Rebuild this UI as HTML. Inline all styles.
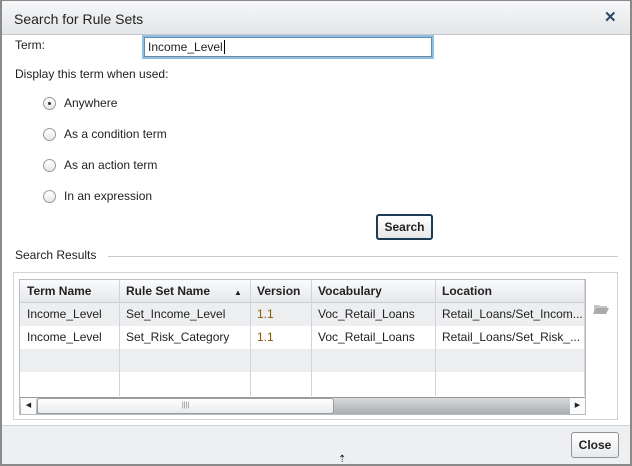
<!DOCTYPE html>
<html><head><style>
*{box-sizing:border-box;margin:0;padding:0}
body{width:632px;height:466px;overflow:hidden;background:#fff;font-family:"Liberation Sans",sans-serif;font-size:12px;color:#222;position:relative}
.a{position:absolute}
.frame{left:0;top:0;width:632px;height:466px;border:2px solid #8a8a8a;border-top:1px solid #8a8a8a}
.title{left:2px;top:1px;width:628px;height:34px;background:linear-gradient(#f6f7f8,#e3e5e8);border-bottom:1px solid #c5c8cc}
.radio{width:13px;height:13px;border-radius:50%;border:1px solid #9a9a9a;background:linear-gradient(#fff,#e8e8e8)}
.cell{position:absolute;white-space:nowrap;overflow:hidden;height:23px;line-height:23px;padding-left:7px}
.hd{font-weight:bold;color:#222;font-size:12px}
.vl{position:absolute;top:0;width:1px;height:116px;background:#d0d3d7}
</style></head><body>
<div class="a title"></div>
<div class="a" style="left:14px;top:11px;font-size:14px;color:#222">Search for Rule Sets</div>
<div class="a" style="left:604px;top:8px;font-size:15px;font-weight:bold;color:#2a4a6a">✕</div>
<div class="a" style="left:15px;top:38px">Term:</div>
<div class="a" style="left:142px;top:35px;width:292px;height:24px;border:2px solid #8fc0e3;background:#fff"><div style="border:1px solid #6b8aa8;height:20px;padding-left:3px;line-height:19px">Income_Level<span style="border-left:1px solid #000;margin-left:1px"></span></div></div>
<div class="a" style="left:15px;top:67px">Display this term when used:</div>
<div class="a radio" style="left:43px;top:97px"><div style="position:absolute;left:4px;top:4px;width:3px;height:3px;background:#333;border-radius:50%"></div></div>
<div class="a" style="left:64px;top:96px">Anywhere</div>
<div class="a radio" style="left:43px;top:128px"></div>
<div class="a" style="left:64px;top:127px">As a condition term</div>
<div class="a radio" style="left:43px;top:159px"></div>
<div class="a" style="left:64px;top:158px">As an action term</div>
<div class="a radio" style="left:43px;top:190px"></div>
<div class="a" style="left:64px;top:189px">In an expression</div>
<div class="a" style="left:376px;top:214px;width:57px;height:26px;border:2px solid #1d3a55;border-radius:3px;background:linear-gradient(#fff,#e6e7e9);font-weight:bold;text-align:center;line-height:22px">Search</div>
<div class="a" style="left:15px;top:248px">Search Results</div>
<div class="a" style="left:108px;top:256px;width:510px;height:1px;background:#c6cace"></div>
<div class="a" style="left:13px;top:272px;width:605px;height:148px;border:1px solid #d0d3d7"></div>
<div class="a" style="left:19px;top:279px;width:567px;height:136px;border:1px solid #b8bcc1;overflow:hidden;background:#fff">
 <div class="a" style="left:0;top:0;width:567px;height:23px;background:linear-gradient(#fafbfc,#e6e8eb);border-bottom:1px solid #c8cbcf"></div>
 <div class="a" style="left:0;top:23px;width:567px;height:23px;background:#eceef0"></div>
 <div class="a" style="left:0;top:69px;width:567px;height:23px;background:#eceef0"></div>
 <div class="vl" style="left:99px"></div><div class="vl" style="left:230px"></div><div class="vl" style="left:291px"></div><div class="vl" style="left:415px"></div><div class="vl" style="left:564px"></div>
 <div class="cell hd" style="left:0;top:0">Term Name</div>
 <div class="cell hd" style="left:99px;top:0">Rule Set Name</div>
 <div class="a" style="left:214px;top:8px;font-size:8px">▲</div>
 <div class="cell hd" style="left:230px;top:0">Version</div>
 <div class="cell hd" style="left:291px;top:0">Vocabulary</div>
 <div class="cell hd" style="left:415px;top:0">Location</div>
 <div class="cell" style="left:0;top:23px">Income_Level</div>
 <div class="cell" style="left:99px;top:23px">Set_Income_Level</div>
 <div class="cell" style="left:230px;top:23px;color:#8a5a00">1.1</div>
 <div class="cell" style="left:291px;top:23px">Voc_Retail_Loans</div>
 <div class="cell" style="left:415px;top:23px;width:150px">Retail_Loans/Set_Incom...</div>
 <div class="cell" style="left:0;top:46px">Income_Level</div>
 <div class="cell" style="left:99px;top:46px">Set_Risk_Category</div>
 <div class="cell" style="left:230px;top:46px;color:#8a5a00">1.1</div>
 <div class="cell" style="left:291px;top:46px">Voc_Retail_Loans</div>
 <div class="cell" style="left:415px;top:46px;width:150px">Retail_Loans/Set_Risk_...</div>
 <div class="a" style="left:0;top:117px;width:567px;height:18px;background:linear-gradient(#d8dadd,#a8abaf);border-top:1px solid #999"></div>
 <div class="a" style="left:1px;top:118px;width:15px;height:16px;background:#fafafa;font-size:7px;text-align:center;line-height:16px">◀</div>
 <div class="a" style="left:550px;top:118px;width:15px;height:16px;background:#fafafa;font-size:7px;text-align:center;line-height:16px">▶</div>
 <div class="a" style="left:17px;top:118px;width:297px;height:16px;background:linear-gradient(#fff,#e9eaec);border:1px solid #9a9da1;border-radius:3px;text-align:center;font-size:7px;line-height:14px;color:#777">||||</div>
</div>
<svg class="a" style="left:593px;top:303px" width="16" height="12"><path d="M1 2h5l1 1h7v2H4L1 11z" fill="#c2c4c6"/><path d="M3 5h13l-3 6H0z" fill="#a9abad"/></svg>
<div class="a" style="left:2px;top:425px;width:628px;height:39px;background:#eeeff1;border-top:1px solid #cfd2d5"></div>
<div class="a" style="left:571px;top:432px;width:48px;height:26px;border:1px solid #8e9196;border-radius:3px;background:linear-gradient(#fff,#e8e9eb);font-weight:bold;text-align:center;line-height:24px">Close</div>
<div class="a" style="left:338px;top:454px;font-size:10px">⇡</div>
<div class="a frame"></div>
</body></html>
